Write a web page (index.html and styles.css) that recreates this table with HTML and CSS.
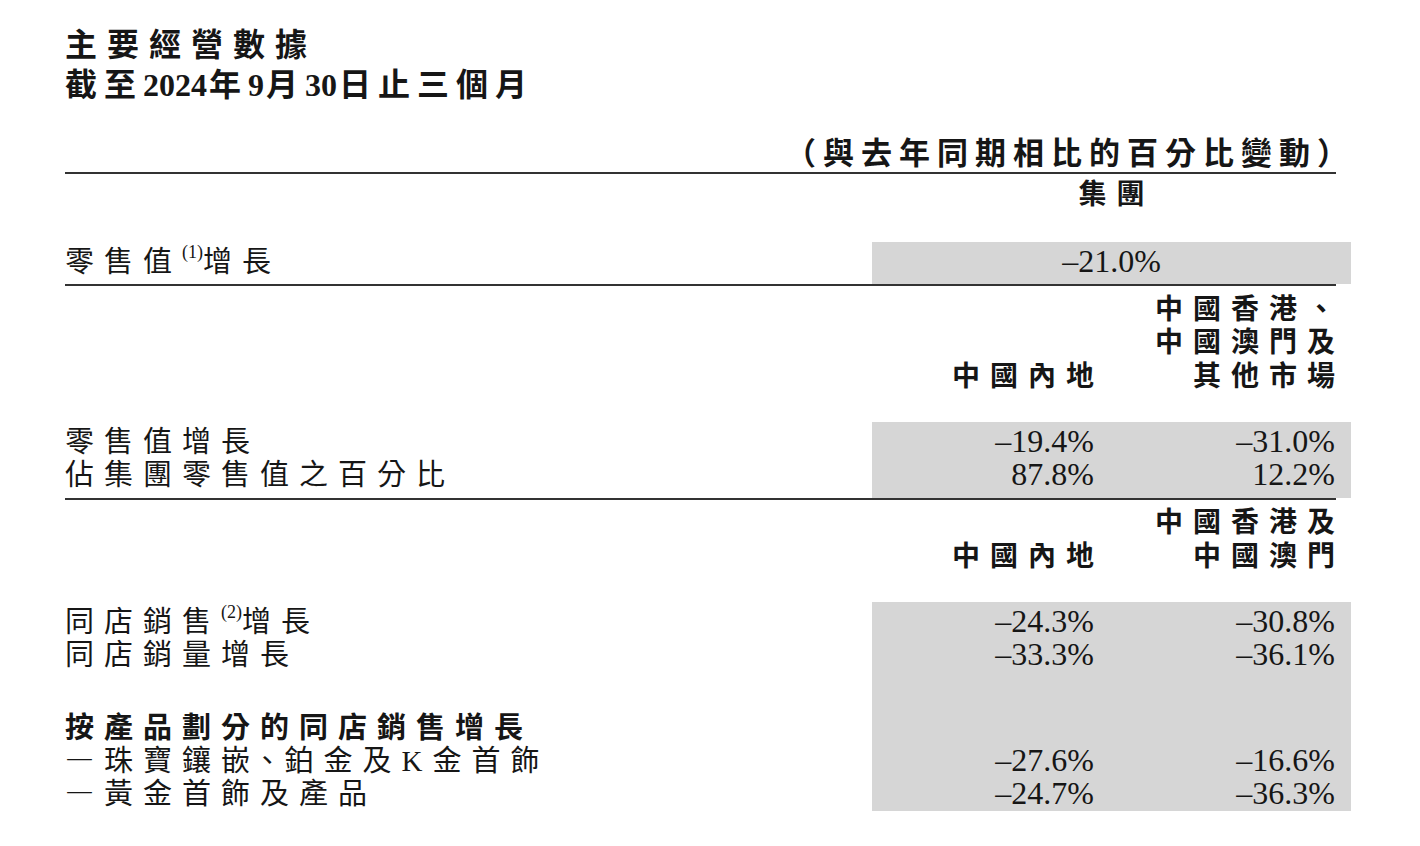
FILE: index.html
```html
<!DOCTYPE html>
<html lang="zh-Hant">
<head>
<meta charset="utf-8">
<title>主要經營數據</title>
<link rel="stylesheet" href="styles.css">
</head>
<body>
<main class="page">
  <header class="title">
    <h1 class="title-line wide">主要經營數據</h1>
    <p class="title-line">截至<span class="num">2024</span>年<span class="num">9</span>月<span class="num">30</span>日止三個月</p>
  </header>

  <p class="note">（與去年同期相比的百分比變動）</p>
  <div class="rule rule-1"></div>

  <div class="grid head head-group">
    <div class="hcell hcell-center"><div class="hl">集團</div></div>
  </div>

  <section class="shade shade-1">
    <div class="grid row">
      <div class="label">零售值<sup class="fn">(1)</sup>增長</div>
      <div class="val val-center">–21.0%</div>
    </div>
  </section>
  <div class="rule"></div>

  <div class="grid head head-3">
    <div class="hcell hcell-1"><div class="hl">中國內地</div></div>
    <div class="hcell hcell-2">
      <div class="hl">中國香港、</div>
      <div class="hl">中國澳門及</div>
      <div class="hl">其他市場</div>
    </div>
  </div>

  <section class="shade shade-2">
    <div class="grid row">
      <div class="label">零售值增長</div>
      <div class="val">–19.4%</div>
      <div class="val">–31.0%</div>
    </div>
    <div class="grid row">
      <div class="label">佔集團零售值之百分比</div>
      <div class="val">87.8%</div>
      <div class="val">12.2%</div>
    </div>
  </section>
  <div class="rule"></div>

  <div class="grid head head-2">
    <div class="hcell hcell-1"><div class="hl">中國內地</div></div>
    <div class="hcell hcell-2">
      <div class="hl">中國香港及</div>
      <div class="hl">中國澳門</div>
    </div>
  </div>

  <section class="shade shade-3">
    <div class="grid row">
      <div class="label">同店銷售<sup class="fn">(2)</sup>增長</div>
      <div class="val">–24.3%</div>
      <div class="val">–30.8%</div>
    </div>
    <div class="grid row">
      <div class="label">同店銷量增長</div>
      <div class="val">–33.3%</div>
      <div class="val">–36.1%</div>
    </div>
    <div class="spacer"></div>
    <div class="grid row">
      <div class="label label-bold">按產品劃分的同店銷售增長</div>
    </div>
    <div class="grid row">
      <div class="label">—珠寶鑲嵌<span class="half">、</span>鉑金及<span class="latin">K</span>金首飾</div>
      <div class="val">–27.6%</div>
      <div class="val">–16.6%</div>
    </div>
    <div class="grid row">
      <div class="label">—黃金首飾及產品</div>
      <div class="val">–24.7%</div>
      <div class="val">–36.3%</div>
    </div>
  </section>
</main>
</body>
</html>
```

FILE: styles.css
```css
* { box-sizing: border-box; }

html, body {
  margin: 0;
  padding: 0;
  background: #ffffff;
}

body {
  font-family: "Noto Sans CJK TC", "Noto Sans CJK SC", sans-serif;
  color: #161616;
}

.page {
  width: 1351px;
  padding: 22px 0 0 65px;
}

/* ---------- title ---------- */
.title { margin: 0; }

.title-line {
  margin: 0;
  font-size: 32px;
  line-height: 40px;
  font-weight: 700;
  letter-spacing: 7px;
}

.title-line.wide { letter-spacing: 10px; }

.num {
  font-family: "Liberation Serif", serif;
  font-weight: 700;
  letter-spacing: 0;
  line-height: 1;
  margin-right: 2px;
}

/* ---------- note + rules ---------- */
.note {
  margin: 31px -4px 0 0;
  font-size: 31px;
  line-height: 36px;
  font-weight: 700;
  letter-spacing: 7px;
  text-align: right;
}

.rule {
  width: 1271px;
  height: 2px;
  background: #333333;
}

.rule-1 { margin-top: 3px; }

/* ---------- shared grid ---------- */
.grid {
  display: grid;
  grid-template-columns: 807px 238px 241px;
}

/* ---------- headers ---------- */
.head {
  align-items: end;
  font-size: 28px;
  line-height: 33.5px;
  font-weight: 700;
  letter-spacing: 10px;
}

.hcell { text-align: right; padding-right: 6px; }
.hcell-1 { grid-column: 2; }
.hcell-2 { grid-column: 3; }
.hcell-center {
  grid-column: 2 / 4;
  text-align: center;
  padding-right: 0;
  padding-left: 10px;
}

.head-group { margin-top: 2px; }
.head-3 { margin-top: 5px; }
.head-2 { margin-top: 4px; }

/* ---------- shaded blocks ---------- */
.shade {
  background: linear-gradient(90deg, transparent 807px, #d6d6d6 807px);
}

.shade-1 { margin-top: 32px; padding: 1px 0 8px; }
.shade-2 { margin-top: 31px; padding: 1px 0 9px; }
.shade-3 { margin-top: 31px; padding: 1px 0 3px; }

.row {
  height: 33px;
  align-items: baseline;
}

.spacer { height: 40px; }

.label {
  grid-column: 1;
  font-size: 29px;
  line-height: 33px;
  letter-spacing: 10px;
  white-space: nowrap;
}

.label-bold { font-weight: 700; }

.half {
  font-feature-settings: "halt" 1;
}

.latin {
  font-family: "Liberation Serif", serif;
}

.fn {
  font-family: "Liberation Serif", serif;
  font-size: 18px;
  line-height: 0;
  letter-spacing: 0;
  vertical-align: 14px;
  margin-right: 0;
}

.val {
  font-family: "Liberation Serif", serif;
  font-size: 32px;
  line-height: 33px;
  text-align: right;
  padding-right: 16px;
  white-space: nowrap;
}

.val-center {
  grid-column: 2 / 4;
  text-align: center;
  padding-right: 0;
}
```
